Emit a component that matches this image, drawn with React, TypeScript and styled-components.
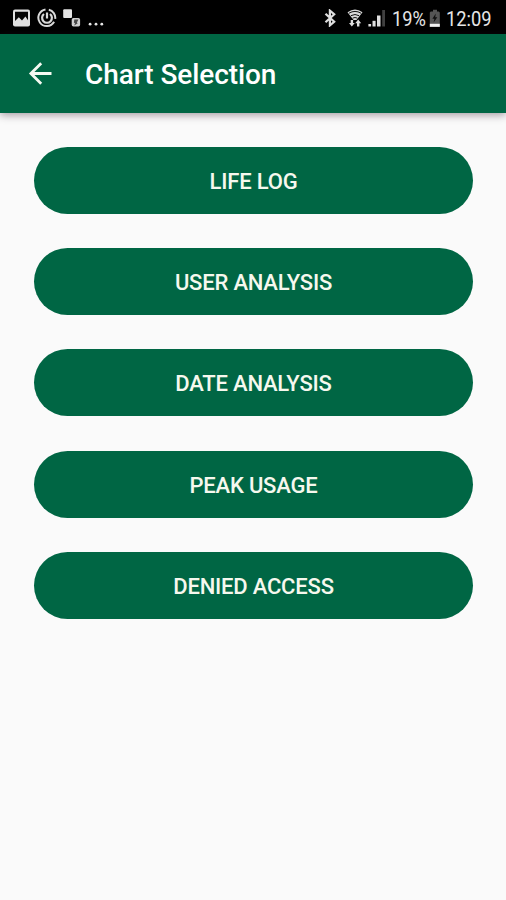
import React from 'react';
import styled, { createGlobalStyle } from 'styled-components';

const GlobalStyle = createGlobalStyle`
  * { box-sizing: border-box; }
  body { margin: 0; background: #fafafa; font-family: Roboto, "Liberation Sans", sans-serif; }
`;

const Screen = styled.div`
  display: flex;
  flex-direction: column;
  height: 900px;
  background: #fafafa;
`;

const StatusBar = styled.div`
  display: flex;
  justify-content: space-between;
  height: 34px;
  padding: 0 12px 0 12px;
  background: #000;
  color: #e6e6e6;
`;

const StatusGroup = styled.div`
  display: flex;
  align-items: center;
  height: 36px;
`;

const StatusIcon = styled.svg<{ $gap?: number }>`
  display: block;
  flex: none;
  margin-right: ${({ $gap = 0 }) => $gap}px;
`;

const StatusText = styled.span<{ $width: number; $gap?: number }>`
  width: ${({ $width }) => $width}px;
  margin-right: ${({ $gap = 0 }) => $gap}px;
  padding-top: 2px;
  font-size: 21px;
  line-height: 24px;
  white-space: nowrap;
  transform: scaleX(0.87);
  transform-origin: left center;
`;

const AppBar = styled.header`
  position: relative;
  display: flex;
  align-items: center;
  height: 78.5px;
  padding-left: 28px;
  background: #006644;
  color: #fff;
  box-shadow: 0 2px 8px rgba(40, 20, 35, 0.42);
`;

const BackButton = styled.button`
  display: flex;
  width: 24px;
  height: 24px;
  margin-right: 33px;
  padding: 0;
  border: 0;
  background: none;
  color: #f5faf2;
`;

const Title = styled.h1`
  margin: 4px 0 0;
  font-size: 28px;
  line-height: 34px;
  font-weight: 500;
  letter-spacing: -0.07px;
`;

const ChartList = styled.main`
  display: flex;
  flex-direction: column;
  gap: 34.3px;
  padding: 34.2px 33px 0 34px;
`;

const ChartButton = styled.button`
  height: 67px;
  padding: 3px 0 0;
  border: 0;
  border-radius: 34px;
  background: #006644;
  color: #f6f8ee;
  font: 500 22px/26px Roboto, "Liberation Sans", sans-serif;
  letter-spacing: -0.2px;
  text-transform: uppercase;
`;

const PictureIcon = () => (
  <StatusIcon width="19" height="18" viewBox="0 0 19 18" $gap={6}>
    <rect x="1" y="0.5" width="17" height="17" rx="2" fill="#e0e0e0" />
    <path d="M3 2.8h13v8.4l-2.6-3.8-3.4 4.2L6.8 8.2 3 12z" fill="#050505" />
  </StatusIcon>
);

const TimerIcon = () => (
  <StatusIcon width="20" height="20" viewBox="0 0 20 20" $gap={6} fill="none" stroke="#d8d8d8">
    <path d="M8.5 1.4a8.4 8.4 0 1 0 8.6 12.4M11.8 1.7a8.3 8.3 0 0 1 6.4 9.2" strokeWidth="2" />
    <path d="M7 6a4.9 4.9 0 1 0 6 0M10 4.4v6.2" strokeWidth="2.2" />
  </StatusIcon>
);

const TransferIcon = () => (
  <StatusIcon width="18" height="18" viewBox="0 0 18 18" $gap={7}>
    <rect x="0.2" y="0.2" width="8.8" height="8.8" rx="1" fill="#e4e4e4" />
    <rect x="8.7" y="9" width="8.4" height="8.4" rx="1.7" fill="#cecece" />
    <path d="M11.3 10.6h4.1l-1.5 3 .8.6-3.4 2.2.7-2.3-1.1-.3z" fill="#484848" />
  </StatusIcon>
);

const MoreIcon = () => (
  <StatusIcon width="18" height="18" viewBox="0 0 18 18" fill="#e6e6e6">
    <circle cx="2.1" cy="15.2" r="1.4" />
    <circle cx="8" cy="15.2" r="1.4" />
    <circle cx="13.8" cy="15.2" r="1.4" />
  </StatusIcon>
);

const BluetoothIcon = () => (
  <StatusIcon width="13" height="18" viewBox="0 0 13 18" $gap={10} fill="none" stroke="#dedede">
    <path d="M1.5 4.7l8.7 8.1-4.3 3.6V1.6l4.3 3.6-8.7 8.1" strokeWidth="2.2" />
  </StatusIcon>
);

const WifiIcon = () => (
  <StatusIcon width="16" height="18" viewBox="0 0 16 18" $gap={5}>
    <path d="M0.5 3.2Q8-2.2 15.5 3.2L9.5 11h-3z" fill="#d8d8d8" />
    <path d="M2 4.2q6-3.6 12 0M3.9 6.7q4.1-2.4 8.2 0M5.7 9.1q2.3-1.2 4.6 0" fill="none" stroke="#111" strokeWidth="1" />
    <path d="M2 14h1.7v-3h2.4v3h1.7l-3 3.6zM8.2 14.2l3-3.6 3 3.6h-1.8v3.4H10v-3.4z" fill="#dedede" />
  </StatusIcon>
);

const SignalIcon = () => (
  <StatusIcon width="18" height="18" viewBox="0 0 18 18" $gap={6} fill="#e0e0e0">
    <rect x="0.4" y="15" width="2.7" height="2.5" />
    <rect x="4.5" y="11.8" width="3.1" height="5.7" />
    <rect x="9" y="6.5" width="3.5" height="11" />
    <rect x="14.2" y="1" width="2.8" height="16.5" fill="#404040" />
  </StatusIcon>
);

const BatteryIcon = () => (
  <StatusIcon width="12" height="19" viewBox="0 0 12 19" $gap={5}>
    <path d="M4 0.8h4v1.6h1.8l1 1V18H0.8V3.4l1-1H4z" fill="#555" />
    <path d="M6.8 4.4L3.4 9.8h2l-.8 3.7L8.3 8.3H6.2z" fill="#101010" />
    <rect x="0.8" y="14.8" width="10" height="3" fill="#f2f2f2" />
  </StatusIcon>
);

const charts = ['Life Log', 'User Analysis', 'Date Analysis', 'Peak Usage', 'Denied Access'];

export default function App() {
  return (
    <Screen>
      <GlobalStyle />
      <StatusBar>
        <StatusGroup>
          <PictureIcon />
          <TimerIcon />
          <TransferIcon />
          <MoreIcon />
        </StatusGroup>
        <StatusGroup>
          <BluetoothIcon />
          <WifiIcon />
          <SignalIcon />
          <StatusText $width={33} $gap={4}>19%</StatusText>
          <BatteryIcon />
          <StatusText $width={48}>12:09</StatusText>
        </StatusGroup>
      </StatusBar>
      <AppBar>
        <BackButton aria-label="Back">
          <svg width="24" height="24" viewBox="0 0 24 24" fill="none" stroke="currentColor" strokeWidth="2.8">
            <path d="M23.5 12.5H3M13.2 2.2L2.9 12.5l10.3 10.3" />
          </svg>
        </BackButton>
        <Title>Chart Selection</Title>
      </AppBar>
      <ChartList>
        {charts.map((name) => (
          <ChartButton key={name}>{name}</ChartButton>
        ))}
      </ChartList>
    </Screen>
  );
}
